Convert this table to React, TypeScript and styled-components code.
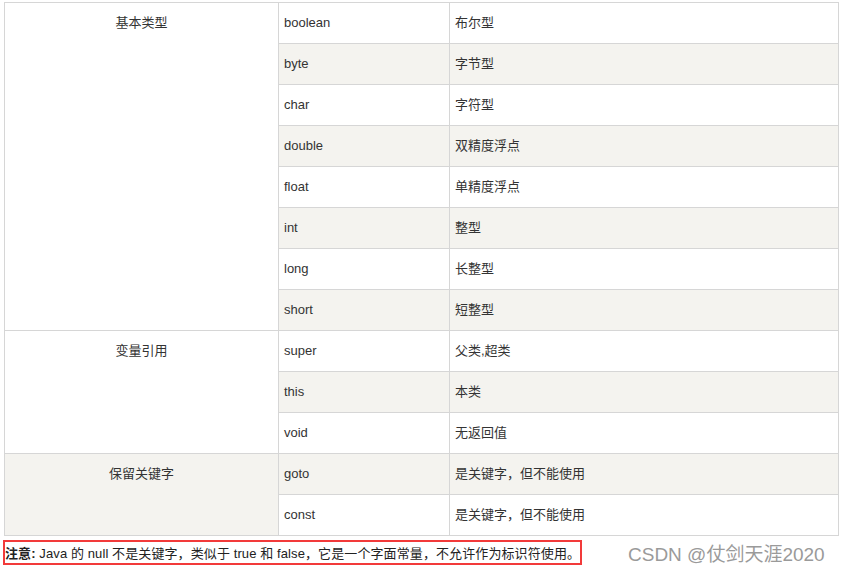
import React from "react";
import styled, { createGlobalStyle } from "styled-components";

const Global = createGlobalStyle`
  html, body { margin: 0; padding: 0; background: #fff; }
  body { font-family: "Liberation Sans", Arial, "Noto Sans CJK SC", sans-serif; color: #333; }
`;

const Page = styled.div`
  width: 843px;
  height: 571px;
  padding: 2px 0 0 4px;
  box-sizing: border-box;
  overflow: hidden;
`;

const Table = styled.table`
  border-collapse: collapse;
  width: 835px;
  table-layout: fixed;
  font-size: 13px;
`;

const Row = styled.tr<{ $alt?: boolean }>`
  background: ${(p) => (p.$alt ? "#f4f3ef" : "#fff")};
`;

const Cell = styled.td<{ $center?: boolean }>`
  border: 1px solid #d6d6d6;
  padding: 11px 5px;
  height: 18px;
  line-height: 18px;
  vertical-align: top;
  text-align: ${(p) => (p.$center ? "center" : "left")};
  color: #333;
`;

const Footer = styled.div`
  display: flex;
  align-items: center;
  margin-top: 3px;
  margin-left: -1px;
`;

const Note = styled.div`
  border: 2px solid #f23a3a;
  height: 21px;
  width: 575px;
  box-sizing: content-box;
  display: flex;
  align-items: center;
  font-size: 13px;
  letter-spacing: 0.1px;
  color: #222;
  white-space: nowrap;
`;

const Strong = styled.b`
  font-weight: bold;
`;

const Watermark = styled.div`
  margin-left: 46px;
  font-size: 19px;
  color: #9a9a9a;
  white-space: nowrap;
`;

type Group = { label: string; items: [string, string][] };

const groups: Group[] = [
  {
    label: "基本类型",
    items: [
      ["boolean", "布尔型"],
      ["byte", "字节型"],
      ["char", "字符型"],
      ["double", "双精度浮点"],
      ["float", "单精度浮点"],
      ["int", "整型"],
      ["long", "长整型"],
      ["short", "短整型"],
    ],
  },
  {
    label: "变量引用",
    items: [
      ["super", "父类,超类"],
      ["this", "本类"],
      ["void", "无返回值"],
    ],
  },
  {
    label: "保留关键字",
    items: [
      ["goto", "是关键字，但不能使用"],
      ["const", "是关键字，但不能使用"],
    ],
  },
];

export default function App() {
  let idx = 0;
  return (
    <Page>
      <Global />
      <Table>
        <colgroup>
          <col style={{ width: 274 }} />
          <col style={{ width: 171 }} />
          <col />
        </colgroup>
        <tbody>
          {groups.map((g) =>
            g.items.map(([k, d], i) => {
              const alt = idx % 2 === 1;
              idx++;
              return (
                <Row key={k} $alt={alt}>
                  {i === 0 && (
                    <Cell $center rowSpan={g.items.length}>
                      {g.label}
                    </Cell>
                  )}
                  <Cell>{k}</Cell>
                  <Cell>{d}</Cell>
                </Row>
              );
            })
          )}
        </tbody>
      </Table>
      <Footer>
        <Note>
          <Strong>注意:</Strong>&nbsp;Java 的 null 不是关键字，类似于 true 和 false，它是一个字面常量，不允许作为标识符使用。
        </Note>
        <Watermark>CSDN @仗剑天涯2020</Watermark>
      </Footer>
    </Page>
  );
}
